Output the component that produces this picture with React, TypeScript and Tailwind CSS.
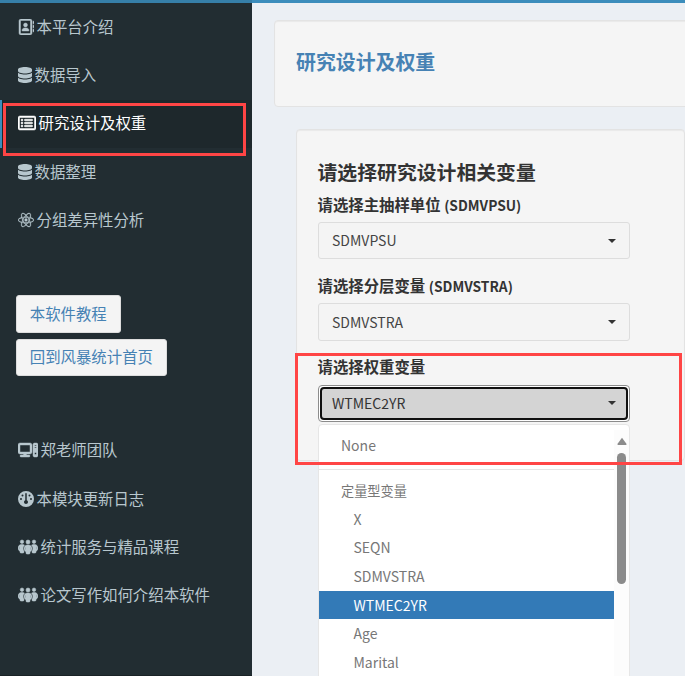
import type { ReactNode } from "react";
import {
  FaRegAddressBook,
  FaDatabase,
  FaRegRectangleList,
  FaReact,
  FaComputer,
  FaGauge,
  FaPeopleGroup,
} from "react-icons/fa6";

type NavItem = { label: string; icon: ReactNode; active?: boolean };

const mainNav: NavItem[] = [
  { label: "本平台介绍", icon: <FaRegAddressBook className="h-4 w-4 stroke-current stroke-[14px]" /> },
  { label: "数据导入", icon: <FaDatabase className="h-4 w-[14px]" /> },
  {
    label: "研究设计及权重",
    icon: <FaRegRectangleList className="h-4 w-[18px] stroke-current stroke-[16px]" />,
    active: true,
  },
  { label: "数据整理", icon: <FaDatabase className="h-4 w-[14px]" /> },
  { label: "分组差异性分析", icon: <FaReact className="h-4 w-4 stroke-current stroke-[10px]" /> },
];

const infoNav: NavItem[] = [
  { label: "郑老师团队", icon: <FaComputer className="h-4 w-5 stroke-current stroke-[14px]" /> },
  { label: "本模块更新日志", icon: <FaGauge className="h-4 w-4" /> },
  { label: "统计服务与精品课程", icon: <FaPeopleGroup className="h-4 w-5 stroke-current stroke-[18px]" /> },
  { label: "论文写作如何介绍本软件", icon: <FaPeopleGroup className="h-4 w-5 stroke-current stroke-[18px]" /> },
];

const options = ["X", "SEQN", "SDMVSTRA", "WTMEC2YR", "Age", "Marital"];

function NavRow({ label, icon, active }: NavItem) {
  return (
    <li
      className={
        "flex h-[48.4px] items-center gap-[2.5px] border-l-2 pl-4 " +
        (active ? "border-[#3c8dbc] bg-[#1e282c] text-white" : "border-transparent text-[#b8c7ce]")
      }
    >
      <span className="flex shrink-0 pb-[1.4px]">{icon}</span>
      <span className="whitespace-nowrap pb-[3.4px]">{label}</span>
    </li>
  );
}

function SideButton({ children }: { children: ReactNode }) {
  return (
    <a className="flex h-[37.6px] items-center rounded-[3px] border border-[#ddd] bg-[#f4f4f4] px-[12.8px] pb-[2.4px] text-[#4682b4]">
      {children}
    </a>
  );
}

function Caret() {
  return <span className="h-0 w-0 border-x-4 border-t-4 border-x-transparent border-t-[#333]" />;
}

function Picker({ label, code, value, open }: { label: string; code?: string; value: string; open?: boolean }) {
  return (
    <div className="mb-[16.5px]">
      <div className="-ml-[0.5px] -mt-[2px] mb-[7.5px] flex h-[22px] items-baseline gap-[3.5px] font-bold leading-[22px] text-[#333]">
        <span>{label}</span>
        {code && <span className="text-[13.8px]">({code})</span>}
      </div>
      {open ? (
        <div className="relative h-[37.4px] rounded-[4px] border border-[#8c8c8c] bg-white p-px">
          <div className="flex h-full items-center justify-between rounded-[4px] border-2 border-[#101010] bg-[#d4d4d4] pl-[10px] pr-[10px] text-[14px] text-[#333]">
            <span className="pb-px">{value}</span>
            <Caret />
          </div>
          <Menu />
        </div>
      ) : (
        <div className="flex h-[37.4px] items-center justify-between rounded-[3px] border border-[#ddd] bg-[#f4f4f4] px-[13px] text-[14px] text-[#444]">
          <span className="pb-px">{value}</span>
          <Caret />
        </div>
      )}
    </div>
  );
}

function Menu() {
  return (
    <div className="absolute -left-px top-[38px] flex h-[300px] w-[312px] rounded-t-[4px] border border-[#e6e6e6] bg-white pt-[5.5px] text-[14px] text-[#777]">
      <div className="flex-1">
        <div className="flex h-[28.6px] items-center pl-[22px]">None</div>
        <div className="my-[9.9px] h-px bg-[#e5e5e5]" />
        <div className="h-[25.4px] pl-[22px] pt-[1px] text-[13.2px] leading-[20px]">定量型变量</div>
        {options.map((name) => (
          <div
            key={name}
            className={
              "flex h-[28.6px] items-center pb-px pl-[34.5px] " +
              (name === "WTMEC2YR" ? "bg-[#337ab7] text-white" : "")
            }
          >
            {name}
          </div>
        ))}
      </div>
      <div className="flex w-[15px] flex-col items-center bg-[#fcfcfc] pt-[7px]">
        <svg className="h-[9px] w-[10px]" viewBox="0 0 10 9">
          <path d="M5 0.8 L9.6 7 Q9.6 8 8.8 8 H1.2 Q.4 8 .4 7Z" fill="#8b8b8b" />
        </svg>
        <div className="mt-[7px] h-[131px] w-[9px] rounded-full bg-[#8b8b8b]" />
      </div>
    </div>
  );
}

export default function App() {
  return (
    <div className="relative flex h-[676px] w-[685px] overflow-hidden bg-[#ebeff4] font-['Noto_Sans_CJK_SC',sans-serif] text-[15.4px] leading-[22px]">
      <aside className="w-[252px] shrink-0 border-b border-b-[#1a2226] bg-[#222d32]">
        <div className="h-[3px] bg-[#367fa9]" />
        <ul className="flex flex-col">
          {mainNav.map((item) => (
            <NavRow key={item.label} {...item} />
          ))}
        </ul>
        <div className="mt-[50px] flex flex-col items-start gap-[6px] pl-4">
          <SideButton>本软件教程</SideButton>
          <SideButton>回到风暴统计首页</SideButton>
        </div>
        <ul className="mt-[50.5px] flex flex-col">
          {infoNav.map((item) => (
            <NavRow key={item.label} {...item} />
          ))}
        </ul>
      </aside>

      <main className="min-w-0 flex-1">
        <div className="h-[3px] bg-[#3c8dbc]" />
        <section className="ml-[22px] mt-[17px] flex h-[87px] w-[440px] items-center rounded-[4px] border border-[#e3e3e3] bg-[#f5f5f5] pb-[4px] pl-[21px] shadow-[inset_0_1px_1px_rgba(0,0,0,0.05)]">
          <h3 className="text-[19.9px] font-bold text-[#4682b4]">研究设计及权重</h3>
        </section>
        <section className="ml-[44px] mt-[22px] h-[331.5px] w-[389px] rounded-[4px] border border-[#e3e3e3] bg-[#f5f5f5] pl-[21px] pt-[30.5px] shadow-[inset_0_1px_1px_rgba(0,0,0,0.05)]">
          <div className="w-[312px]">
            <h3 className="-ml-[0.5px] mb-[12px] text-[19.85px] font-bold leading-[22px] text-[#333]">
              请选择研究设计相关变量
            </h3>
            <Picker label="请选择主抽样单位" code="SDMVPSU" value="SDMVPSU" />
            <Picker label="请选择分层变量" code="SDMVSTRA" value="SDMVSTRA" />
            <Picker label="请选择权重变量" value="WTMEC2YR" open />
          </div>
        </section>
      </main>

      <div className="pointer-events-none absolute left-[3px] top-[103px] h-[53px] w-[243px] border-[3px] border-[#ff4545]" />
      <div className="pointer-events-none absolute left-[295px] top-[353px] h-[112px] w-[387px] border-[3px] border-[#ff4545]" />
    </div>
  );
}
